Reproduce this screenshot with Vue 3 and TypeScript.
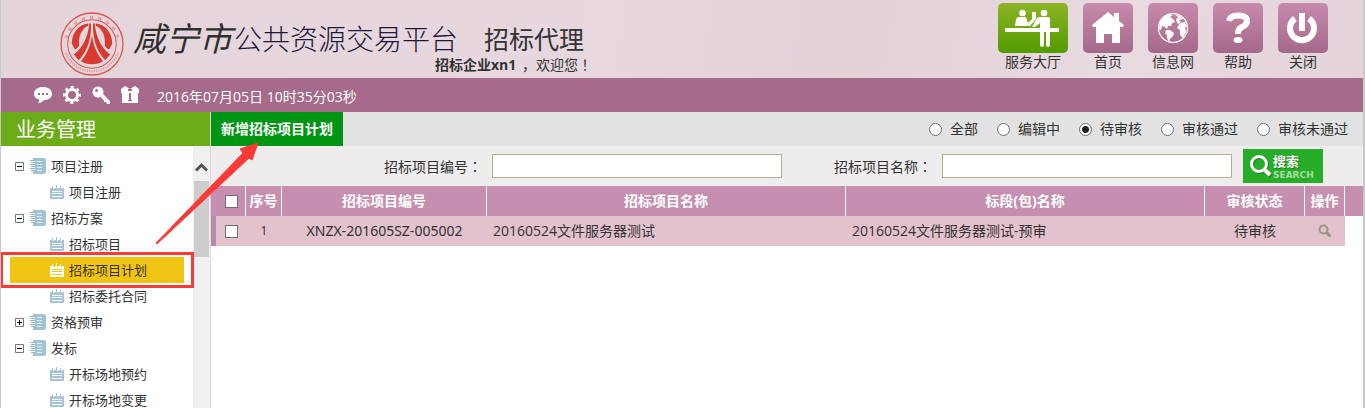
<script setup lang="ts">
import { ref } from 'vue'

interface TreeNode {
  label: string
  kind: 'group' | 'leaf'
  open?: boolean
  active?: boolean
}

const nodes: TreeNode[] = [
  { label: '项目注册', kind: 'group', open: true },
  { label: '项目注册', kind: 'leaf' },
  { label: '招标方案', kind: 'group', open: true },
  { label: '招标项目', kind: 'leaf' },
  { label: '招标项目计划', kind: 'leaf', active: true },
  { label: '招标委托合同', kind: 'leaf' },
  { label: '资格预审', kind: 'group', open: false },
  { label: '发标', kind: 'group', open: true },
  { label: '开标场地预约', kind: 'leaf' },
  { label: '开标场地变更', kind: 'leaf' },
]

const statuses = ['全部', '编辑中', '待审核', '审核通过', '审核未通过']
const status = ref('待审核')
const code = ref('')
const projectName = ref('')

const rows = [
  { code: 'XNZX-201605SZ-005002', name: '20160524文件服务器测试', section: '20160524文件服务器测试-预审', state: '待审核' },
]
</script>

<template>
  <div class="page">
    <header class="banner">
      <svg class="logo" viewBox="0 0 190 190" aria-hidden="true">
        <g fill="none" stroke="#dc5750">
          <circle cx="95" cy="95" r="92" stroke-width="4" />
          <circle cx="95" cy="95" r="72" stroke-width="3" />
          <path d="M18 78A79 79 0 0 1 172 78" stroke="#e08a88" stroke-width="9" stroke-dasharray="3 2 4 16" />
          <path d="M18 122A82 82 0 0 0 172 122" stroke="#e3a0a0" stroke-width="6" stroke-dasharray="4 3" />
        </g>
        <g fill="#d93a30">
          <path d="M84 34C55 37 35 62 35 94L44 111C50 109 55 105 57 99C54 73 64 50 84 41Z" />
          <path d="M106 34C135 37 155 62 155 94L146 111C140 109 135 105 133 99C136 73 126 50 106 41Z" />
          <path d="M87 34H92V48C91 88 78 119 56 143L41 126C67 107 83 76 87 34Z" />
          <path d="M103 34H98V48C99 88 112 119 134 143L149 126C123 107 107 76 103 34Z" />
          <path d="M95 69C91 100 80 126 62 146C81 158 109 158 128 146C110 126 99 100 95 69Z" />
        </g>
      </svg>
      <div class="brand">
        <h1 class="title">
          <span class="city">咸宁市</span>
          <span class="platform">公共资源交易平台</span>
          <span class="role">招标代理</span>
        </h1>
        <p class="welcome"><b>招标企业xn1</b> <span class="greeting">，欢迎您<span class="punct">！</span></span></p>
      </div>
      <nav class="shortcuts">
        <a href="#" class="shortcut">
          <span class="tile hall">
            <svg width="70" height="50" viewBox="0 0 70 50" fill="#fff">
              <circle cx="24.500" cy="10" r="3.300" />
              <path d="M20 14H28L30 20L34 16V9H38V16L32 23H17L18 16Z" />
              <circle cx="46" cy="10" r="3.300" />
              <path d="M41 14H50Q52 14 52 16V42Q52 44 50 44Q48 44 48 42V29H46V42Q46 44 44 44Q42 44 42 42V20L37 24H34L39 15Z" />
              <path d="M7 25H61V29H7Z" />
            </svg>
          </span>
          服务大厅
        </a>
        <a href="#" class="shortcut">
          <span class="tile">
            <svg width="50" height="50" viewBox="0 0 50 50" fill="#fff">
              <path d="M25 9L31 14V10H36V18L41 22L40 24H37V40H29V31H21V40H13V24H10L9 22Z" />
            </svg>
          </span>
          首页
        </a>
        <a href="#" class="shortcut">
          <span class="tile">
            <svg width="50" height="50" viewBox="0 0 50 50" fill="#fff">
              <circle cx="25" cy="25" r="14.500" fill="none" stroke="#fff" stroke-width="1.200" />
              <path d="M12 19Q15 13 21 11L25 12L22 14L25 16L27 19L24 20L23 23L20 23L19 26L17 24L14 23L13 27L11 26Z" />
              <path d="M18 27L22 27L26 30L25 33L22 36L21 39L19 35L19 32L17 30Z" />
              <path d="M26 11L32 13L35 16L31 17L33 19L30 21L28 17L30 14Z" />
              <path d="M32 20L37 19L39 24L37 24L38 29L35 35L32 32L32 27L29 25Z" />
            </svg>
          </span>
          信息网
        </a>
        <a href="#" class="shortcut">
          <span class="tile">
            <svg width="50" height="50" viewBox="0 0 50 50">
              <path d="M16 18Q17 12.500 25 12.500Q34 12.500 34 18Q34 22 29 24Q25 26 25 30V31" fill="none" stroke="#fff" stroke-width="6" />
              <ellipse cx="25" cy="37" rx="4.500" ry="3" fill="#fff" />
            </svg>
          </span>
          帮助
        </a>
        <a href="#" class="shortcut">
          <span class="tile">
            <svg width="50" height="50" viewBox="0 0 50 50" fill="none" stroke="#fff" stroke-width="6">
              <path d="M17 15.500A12 12 0 1 0 31 15.500" />
              <path d="M24 10V28" />
            </svg>
          </span>
          关闭
        </a>
      </nav>
    </header>

    <div class="strip">
      <button type="button" class="tool" aria-label="消息">
        <svg width="20" height="20" viewBox="0 0 20 20">
          <path d="M10 2C15 2 19 4.500 19 9C19 13 15 15 11 15Q9 18 5 18Q7 16 6 14.500Q1 13 1 9C1 4.500 5 2 10 2Z" fill="#fff" />
          <path d="M5 8h2v2h-2zM9 8h2v2h-2zM13 8h2v2h-2z" fill="#a66a8a" />
        </svg>
      </button>
      <button type="button" class="tool" aria-label="设置">
        <svg width="20" height="20" viewBox="0 0 20 20" fill="none" stroke="#fff">
          <circle cx="10" cy="10" r="5.500" stroke-width="3" />
          <circle cx="10" cy="10" r="8" stroke-width="2" stroke-dasharray="3 3.283" stroke-dashoffset="1.500" />
        </svg>
      </button>
      <button type="button" class="tool" aria-label="密码">
        <svg width="20" height="20" viewBox="0 0 20 20">
          <circle cx="7" cy="7" r="5.500" fill="#fff" />
          <circle cx="5.500" cy="5.500" r="1.500" fill="#a66a8a" />
          <path d="M10 11L12 9L19 16V19H16L15 17L13 17V15L11 14Z" fill="#fff" />
        </svg>
      </button>
      <button type="button" class="tool" aria-label="礼物">
        <svg width="20" height="20" viewBox="0 0 20 20">
          <path d="M1 4L5 1L10 4L15 1L19 4V8H18V18H2V8H1Z" fill="#fff" />
          <path d="M8 4H12V6H8ZM9 8H11V15H12V16H8V15H9Z" fill="#a66a8a" />
        </svg>
      </button>
      <time class="clock">2016年07月05日 10时35分03秒</time>
    </div>

    <div class="body">
      <aside class="side">
        <h2 class="side-title">业务管理</h2>
        <div class="side-body">
          <ul class="tree">
            <li v-for="(n, i) in nodes" :key="i">
              <a href="#" class="node" :class="[n.kind, { active: n.active }]">
                <svg v-if="n.kind === 'group'" class="toggle" width="9" height="9" viewBox="0 0 9 9">
                  <path d="M.5.5H8.500V8.500H.5Z" fill="#fff" stroke="#777" />
                  <path d="M2 4H7V5H2Z" fill="#000" />
                  <path v-if="!n.open" d="M4 2H5V7H4Z" fill="#000" />
                </svg>
                <svg v-if="n.kind === 'group'" width="16" height="16" viewBox="0 0 16 16">
                  <path d="M3 0H14Q16 0 16 2V14Q16 16 14 16H3V13H5V3H3Z" fill="#a2c3d6" />
                  <path d="M5 2H14V14H5Z" fill="#a2c3d6" />
                  <path d="M7 3H12V4H7ZM7 6H12V7H7ZM7 9H12V10H7ZM7 12H12V13H7Z" fill="#e2eef4" />
                  <path d="M0 2H5V3H0ZM1 4H5V5H1ZM0 6H5V7H0ZM1 8H5V9H1ZM0 10H5V11H0ZM1 12H5V13H1Z" fill="#8fb3c8" />
                </svg>
                <svg v-else class="note" width="14" height="14" viewBox="0 0 14 14">
                  <path d="M0 3H2V1H3V4H4V3H6V0H7V4H8V3H10V1H11V4H12V3H14V13Q14 14 13 14H1Q0 14 0 13Z" fill="currentColor" />
                  <path class="lines" d="M2 6H12V7H2ZM2 8H12V9H2ZM2 11H12V12H2Z" />
                </svg>
                <span>{{ n.label }}</span>
              </a>
            </li>
          </ul>
          <div class="scroll" aria-hidden="true">
            <svg class="up" width="16" height="34" viewBox="0 0 16 34">
              <path d="M3 24L8.500 18.500L14 24" fill="none" stroke="#555" stroke-width="3" />
            </svg>
            <div class="thumb"></div>
          </div>
        </div>
      </aside>

      <main class="main">
        <div class="actions">
          <button type="button" class="add">新增招标项目计划</button>
          <div class="filters" role="radiogroup" aria-label="审核状态">
            <label v-for="s in statuses" :key="s" class="filter">
              <input v-model="status" type="radio" name="status" :value="s" />{{ s }}
            </label>
          </div>
        </div>
        <form class="search" @submit.prevent>
          <label for="code">招标项目编号<span class="punct">：</span></label>
          <input id="code" v-model="code" type="text" />
          <label for="name" class="second">招标项目名称<span class="punct">：</span></label>
          <input id="name" v-model="projectName" type="text" />
          <button type="submit" class="go">
            <svg width="24" height="24" viewBox="0 0 24 24" fill="none">
              <g stroke="#1c801c" transform="translate(1 1)">
                <circle cx="10" cy="10" r="7.500" stroke-width="3" /><path d="M15 15L21 21" stroke-width="4" />
              </g>
              <g stroke="#fff">
                <circle cx="10" cy="10" r="7.500" stroke-width="3" /><path d="M15 15L21 21" stroke-width="4" />
              </g>
            </svg>
            <span class="go-text"><b>搜索</b><small>SEARCH</small></span>
          </button>
        </form>
        <table class="grid">
          <colgroup>
            <col class="c-check" /><col class="c-no" /><col class="c-code" /><col /><col />
            <col class="c-state" /><col class="c-op" /><col class="c-end" />
          </colgroup>
          <thead>
            <tr>
              <th><input type="checkbox" aria-label="全选" /></th>
              <th>序号</th>
              <th>招标项目编号</th>
              <th>招标项目名称</th>
              <th>标段(包)名称</th>
              <th>审核状态</th>
              <th>操作</th>
              <th></th>
            </tr>
          </thead>
          <tbody>
            <tr v-for="(r, i) in rows" :key="r.code">
              <td class="first"><input type="checkbox" :aria-label="r.code" /></td>
              <td class="num">{{ i + 1 }}</td>
              <td class="code">{{ r.code }}</td>
              <td class="text">{{ r.name }}</td>
              <td class="text">{{ r.section }}</td>
              <td>{{ r.state }}</td>
              <td>
                <button type="button" class="view" aria-label="查看">
                  <svg width="14" height="14" viewBox="0 0 14 14" fill="none" stroke="#98968a" stroke-width="2">
                    <circle cx="5.500" cy="5.500" r="4" /><path d="M8.500 8.500L12.500 12.500" stroke-width="3" />
                  </svg>
                </button>
              </td>
              <td class="blank"></td>
            </tr>
          </tbody>
        </table>
      </main>
    </div>

    <div class="mark"></div>
    <svg class="arrow" width="104" height="102" viewBox="0 0 104 102" aria-hidden="true">
      <path d="M0 100L87 10L84 6L102 0L96 17L93 15L1 101Z" fill="#fb3a37" stroke="#fb3a37" stroke-linejoin="round" />
    </svg>
  </div>
</template>

<style>
html,
body {
  margin: 0;
  background: #fff;
}
</style>

<style scoped>
* {
  box-sizing: border-box;
}
.page {
  position: relative;
  display: flex;
  flex-direction: column;
  height: 100vh;
  overflow: hidden;
  border-left: 1px solid #c8c8c8;
  border-right: 2px solid #c8c8c8;
  font: 14px/20px "Open Sans", "Noto Sans CJK SC", sans-serif;
  color: #333;
}
a {
  color: inherit;
  text-decoration: none;
}
button {
  border: 0;
  padding: 0;
  background: none;
  font: inherit;
}
svg {
  display: block;
  flex: none;
}
.punct {
  font-family: "Noto Sans CJK TC", sans-serif;
}
.banner {
  display: flex;
  flex: none;
  height: 78px;
  padding-left: 59px;
  padding-right: 35px;
  background: linear-gradient(100deg, #e4d5db 0%, #e7d7df 45%, #e3d1d8 62%, #e8dae1 82%, #e4d3da 100%);
}
.logo {
  width: 64px;
  height: 64px;
  margin-top: 12px;
}
.brand {
  margin-left: 9px;
  padding-top: 21px;
}
.title {
  display: flex;
  align-items: center;
  height: 35px;
  margin: 0;
  font-weight: 300;
  white-space: nowrap;
}
.city {
  font-size: 33px;
  font-style: italic;
  font-weight: 400;
  color: #2f2f2f;
}
.platform {
  margin-left: 2px;
  font-size: 28px;
  color: #1e1838;
}
.role {
  margin-left: 26px;
  font-size: 25px;
  font-weight: 400;
}
.welcome {
  margin: 0;
  padding-left: 302px;
  line-height: 16px;
  white-space: nowrap;
}
.greeting {
  margin-left: 2px;
}
.shortcuts {
  display: flex;
  gap: 15px;
  margin-left: auto;
  padding-top: 3px;
}
.shortcut {
  display: flex;
  flex-direction: column;
  align-items: center;
  line-height: 18px;
}
.tile {
  border-radius: 5px;
  background: linear-gradient(#c78aac, #a4698a);
}
.hall {
  background: linear-gradient(#8cb424, #539b02);
}
.strip {
  display: flex;
  flex: none;
  align-items: center;
  height: 34px;
  padding-left: 32px;
  gap: 9px;
  background: #a66a8a;
  color: #fff;
}
.clock {
  margin-left: 8px;
  padding-top: 3px;
}
.body {
  display: flex;
  flex: 1;
  min-height: 0;
}
.side {
  display: flex;
  flex-direction: column;
  flex: none;
  width: 210px;
  border-right: 1px solid #e6d5dc;
}
.side-title {
  flex: none;
  height: 34px;
  margin: 0;
  padding-left: 15px;
  background: #6dac19;
  color: #fff;
  font-size: 20px;
  font-weight: 400;
  line-height: 36px;
}
.side-body {
  display: flex;
  flex: 1;
  min-height: 0;
  overflow: hidden;
}
.tree {
  flex: 1;
  margin: 0;
  padding: 7px 9px 0;
  list-style: none;
  font-size: 13px;
}
.node {
  display: flex;
  align-items: center;
  height: 26px;
  padding-left: 5px;
  gap: 5px;
}
.toggle {
  margin-right: 1px;
}
.leaf {
  padding-left: 40px;
}
.note {
  color: #a5c4d6;
}
.lines {
  fill: #fff;
}
.active {
  background: #f0c412;
}
.active .note {
  color: #fff;
}
.active .lines {
  fill: #f0c412;
}
.scroll {
  flex: none;
  width: 17px;
  background: #f0f0f0;
}
.thumb {
  width: 15px;
  height: 76px;
  margin-left: 1px;
  background: #cdcdcd;
}
.up {
  height: 35px;
}
.main {
  flex: 1;
  min-width: 0;
}
.actions {
  display: flex;
  align-items: center;
  height: 34px;
  padding-right: 15px;
  background: #e2e2e2;
}
.add {
  height: 34px;
  padding: 0 10px;
  background: #009613;
  color: #fff;
  font-weight: 700;
}
.filters {
  display: flex;
  gap: 19px;
  margin-left: auto;
}
.filter {
  display: flex;
  align-items: center;
  gap: 8px;
}
input {
  appearance: none;
  margin: 0;
  border: 1px solid #6e6e6e;
  background: #fff;
}
input[type="radio"] {
  width: 13px;
  height: 13px;
  border-radius: 50%;
}
input[type="radio"]:checked {
  background: radial-gradient(circle, #222 3px, #fff 4px);
}
input[type="checkbox"] {
  display: block;
  width: 13px;
  height: 13px;
  margin: 0 auto;
}
.search {
  display: flex;
  align-items: center;
  justify-content: flex-end;
  height: 40px;
  padding-right: 40px;
  background: #eeecec;
}
.search input {
  width: 290px;
  height: 24px;
  margin-left: 10px;
  padding: 0 4px;
  border-color: #b5ad91;
  font: inherit;
}
.second {
  margin-left: 52px;
}
.go {
  display: flex;
  align-items: center;
  width: 80px;
  height: 34px;
  margin-left: 11px;
  padding-left: 6px;
  background: #28ad28;
  color: #fff;
}
.go-text {
  display: flex;
  flex-direction: column;
  text-align: left;
}
.go-text b {
  font-size: 13px;
  line-height: 18px;
  text-shadow: 1px 1px #1c801c;
}
.go-text small {
  color: #a4dba4;
  font: 700 9px/10px "DejaVu Sans", sans-serif;
}
.grid {
  width: 100%;
  table-layout: fixed;
  border-collapse: separate;
  border-spacing: 0;
}
.c-check { width: 35px; }
.c-no { width: 36px; }
.c-code { width: 205px; }
.c-state { width: 100px; }
.c-op { width: 40px; }
.c-end { width: 18px; }
th,
td {
  height: 30px;
  padding: 0;
  text-align: center;
  white-space: nowrap;
}
th {
  border-right: 1px solid #fff;
  background: #c68faf;
  color: #fff;
}
th:last-child {
  border-right: 0;
}
th:first-child {
  padding-left: 7px;
}
td {
  background: #e3c1cd;
}
.first {
  border-left: 5px solid #b98ba8;
  padding-left: 1px;
}
.num {
  font-size: 12px;
}
.code {
  font-family: "Noto Sans", "Noto Sans CJK SC", sans-serif;
}
.text {
  padding-left: 6px;
  text-align: left;
}
.blank {
  background: #fff;
}
.view {
  display: block;
  margin: 0 auto;
}
.mark {
  position: absolute;
  top: 252px;
  left: -1px;
  width: 194px;
  height: 36px;
  border: 3px solid #fb3a37;
}
.arrow {
  position: absolute;
  top: 143px;
  left: 155px;
}
</style>
